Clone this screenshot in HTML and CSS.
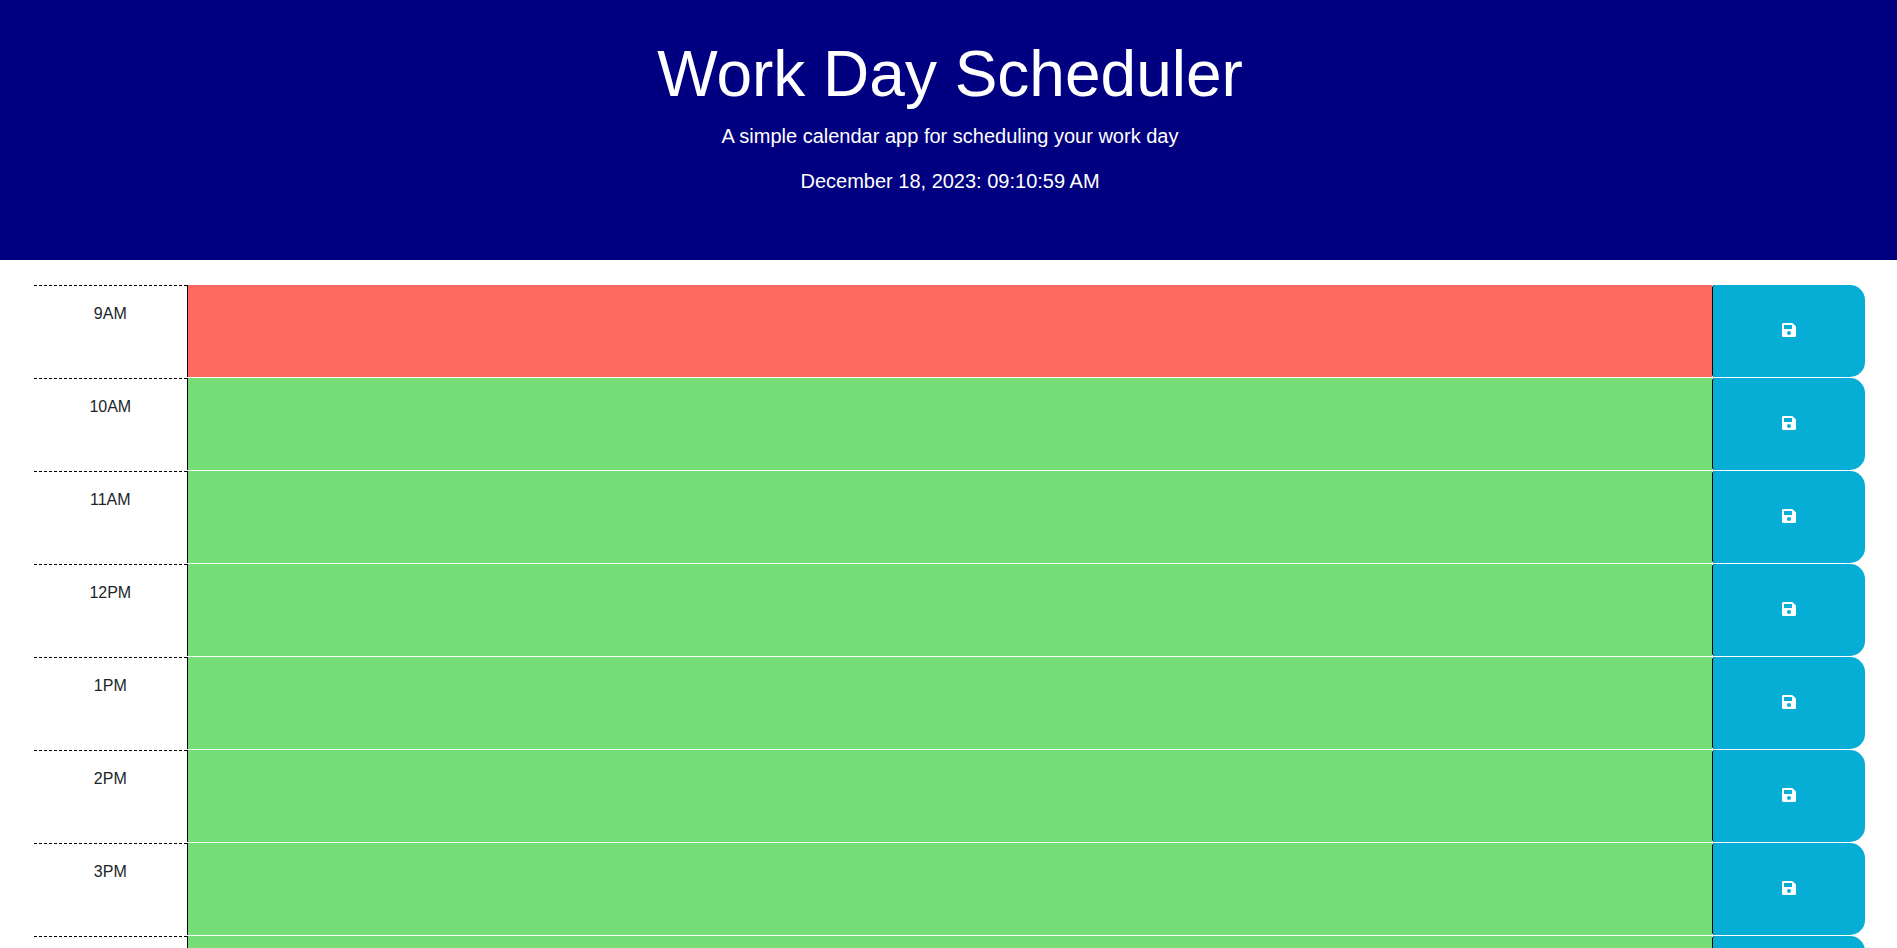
FILE: index.html
```html
<!DOCTYPE html>
<html lang="en">
<head>
  <meta charset="UTF-8">
  <meta name="viewport" content="width=device-width, initial-scale=1.0">
  <title>Work Day Scheduler</title>
  <link rel="stylesheet" href="styles.css">
</head>
<body>
  <header class="jumbotron">
    <h1>Work Day Scheduler</h1>
    <p class="lead">A simple calendar app for scheduling your work day</p>
    <p class="lead">December 18, 2023: 09:10:59 AM</p>
  </header>

  <main class="schedule">
    <div class="time-block">
      <div class="hour">9AM</div>
      <textarea class="description present"></textarea>
      <button class="saveBtn" aria-label="save"><svg class="save-icon" viewBox="0 0 448 512"><path d="M433.941 129.941l-83.882-83.882A48 48 0 0 0 316.118 32H48C21.49 32 0 53.49 0 80v352c0 26.51 21.49 48 48 48h352c26.51 0 48-21.49 48-48V163.882a48 48 0 0 0-14.059-33.941zM224 416c-35.346 0-64-28.654-64-64 0-35.346 28.654-64 64-64s64 28.654 64 64c0 35.346-28.654 64-64 64zm96-304.52V212c0 6.627-5.373 12-12 12H76c-6.627 0-12-5.373-12-12V108c0-6.627 5.373-12 12-12h228.52c3.183 0 6.235 1.264 8.485 3.515l3.48 3.48A11.996 11.996 0 0 1 320 111.48z"/></svg></button>
    </div>
    <div class="time-block">
      <div class="hour">10AM</div>
      <textarea class="description future"></textarea>
      <button class="saveBtn" aria-label="save"><svg class="save-icon" viewBox="0 0 448 512"><path d="M433.941 129.941l-83.882-83.882A48 48 0 0 0 316.118 32H48C21.49 32 0 53.49 0 80v352c0 26.51 21.49 48 48 48h352c26.51 0 48-21.49 48-48V163.882a48 48 0 0 0-14.059-33.941zM224 416c-35.346 0-64-28.654-64-64 0-35.346 28.654-64 64-64s64 28.654 64 64c0 35.346-28.654 64-64 64zm96-304.52V212c0 6.627-5.373 12-12 12H76c-6.627 0-12-5.373-12-12V108c0-6.627 5.373-12 12-12h228.52c3.183 0 6.235 1.264 8.485 3.515l3.48 3.48A11.996 11.996 0 0 1 320 111.48z"/></svg></button>
    </div>
    <div class="time-block">
      <div class="hour">11AM</div>
      <textarea class="description future"></textarea>
      <button class="saveBtn" aria-label="save"><svg class="save-icon" viewBox="0 0 448 512"><path d="M433.941 129.941l-83.882-83.882A48 48 0 0 0 316.118 32H48C21.49 32 0 53.49 0 80v352c0 26.51 21.49 48 48 48h352c26.51 0 48-21.49 48-48V163.882a48 48 0 0 0-14.059-33.941zM224 416c-35.346 0-64-28.654-64-64 0-35.346 28.654-64 64-64s64 28.654 64 64c0 35.346-28.654 64-64 64zm96-304.52V212c0 6.627-5.373 12-12 12H76c-6.627 0-12-5.373-12-12V108c0-6.627 5.373-12 12-12h228.52c3.183 0 6.235 1.264 8.485 3.515l3.48 3.48A11.996 11.996 0 0 1 320 111.48z"/></svg></button>
    </div>
    <div class="time-block">
      <div class="hour">12PM</div>
      <textarea class="description future"></textarea>
      <button class="saveBtn" aria-label="save"><svg class="save-icon" viewBox="0 0 448 512"><path d="M433.941 129.941l-83.882-83.882A48 48 0 0 0 316.118 32H48C21.49 32 0 53.49 0 80v352c0 26.51 21.49 48 48 48h352c26.51 0 48-21.49 48-48V163.882a48 48 0 0 0-14.059-33.941zM224 416c-35.346 0-64-28.654-64-64 0-35.346 28.654-64 64-64s64 28.654 64 64c0 35.346-28.654 64-64 64zm96-304.52V212c0 6.627-5.373 12-12 12H76c-6.627 0-12-5.373-12-12V108c0-6.627 5.373-12 12-12h228.52c3.183 0 6.235 1.264 8.485 3.515l3.48 3.48A11.996 11.996 0 0 1 320 111.48z"/></svg></button>
    </div>
    <div class="time-block">
      <div class="hour">1PM</div>
      <textarea class="description future"></textarea>
      <button class="saveBtn" aria-label="save"><svg class="save-icon" viewBox="0 0 448 512"><path d="M433.941 129.941l-83.882-83.882A48 48 0 0 0 316.118 32H48C21.49 32 0 53.49 0 80v352c0 26.51 21.49 48 48 48h352c26.51 0 48-21.49 48-48V163.882a48 48 0 0 0-14.059-33.941zM224 416c-35.346 0-64-28.654-64-64 0-35.346 28.654-64 64-64s64 28.654 64 64c0 35.346-28.654 64-64 64zm96-304.52V212c0 6.627-5.373 12-12 12H76c-6.627 0-12-5.373-12-12V108c0-6.627 5.373-12 12-12h228.52c3.183 0 6.235 1.264 8.485 3.515l3.48 3.48A11.996 11.996 0 0 1 320 111.48z"/></svg></button>
    </div>
    <div class="time-block">
      <div class="hour">2PM</div>
      <textarea class="description future"></textarea>
      <button class="saveBtn" aria-label="save"><svg class="save-icon" viewBox="0 0 448 512"><path d="M433.941 129.941l-83.882-83.882A48 48 0 0 0 316.118 32H48C21.49 32 0 53.49 0 80v352c0 26.51 21.49 48 48 48h352c26.51 0 48-21.49 48-48V163.882a48 48 0 0 0-14.059-33.941zM224 416c-35.346 0-64-28.654-64-64 0-35.346 28.654-64 64-64s64 28.654 64 64c0 35.346-28.654 64-64 64zm96-304.52V212c0 6.627-5.373 12-12 12H76c-6.627 0-12-5.373-12-12V108c0-6.627 5.373-12 12-12h228.52c3.183 0 6.235 1.264 8.485 3.515l3.48 3.48A11.996 11.996 0 0 1 320 111.48z"/></svg></button>
    </div>
    <div class="time-block">
      <div class="hour">3PM</div>
      <textarea class="description future"></textarea>
      <button class="saveBtn" aria-label="save"><svg class="save-icon" viewBox="0 0 448 512"><path d="M433.941 129.941l-83.882-83.882A48 48 0 0 0 316.118 32H48C21.49 32 0 53.49 0 80v352c0 26.51 21.49 48 48 48h352c26.51 0 48-21.49 48-48V163.882a48 48 0 0 0-14.059-33.941zM224 416c-35.346 0-64-28.654-64-64 0-35.346 28.654-64 64-64s64 28.654 64 64c0 35.346-28.654 64-64 64zm96-304.52V212c0 6.627-5.373 12-12 12H76c-6.627 0-12-5.373-12-12V108c0-6.627 5.373-12 12-12h228.52c3.183 0 6.235 1.264 8.485 3.515l3.48 3.48A11.996 11.996 0 0 1 320 111.48z"/></svg></button>
    </div>
    <div class="time-block">
      <div class="hour"></div>
      <textarea class="description future"></textarea>
      <button class="saveBtn" aria-label="save"><svg class="save-icon" viewBox="0 0 448 512"><path d="M433.941 129.941l-83.882-83.882A48 48 0 0 0 316.118 32H48C21.49 32 0 53.49 0 80v352c0 26.51 21.49 48 48 48h352c26.51 0 48-21.49 48-48V163.882a48 48 0 0 0-14.059-33.941zM224 416c-35.346 0-64-28.654-64-64 0-35.346 28.654-64 64-64s64 28.654 64 64c0 35.346-28.654 64-64 64zm96-304.52V212c0 6.627-5.373 12-12 12H76c-6.627 0-12-5.373-12-12V108c0-6.627 5.373-12 12-12h228.52c3.183 0 6.235 1.264 8.485 3.515l3.48 3.48A11.996 11.996 0 0 1 320 111.48z"/></svg></button>
    </div>
  </main>
</body>
</html>
```

FILE: styles.css
```css
* { box-sizing: border-box; }
body { margin: 0; font-family: "Liberation Sans", Arial, sans-serif; color: #212529; background: #fff; line-height: 1.5; }

.jumbotron { height: 260px; padding: 36px 0 0 3px; background: #000080; color: #fff; text-align: center; }
.jumbotron h1 { margin: 0 0 9px; font-size: 64px; font-weight: 400; line-height: 1.2; }
.lead { margin: 0 0 16px; font-size: 20px; font-weight: 300; line-height: 29px; }

.schedule { margin: 25px 32px 0 34px; }
.time-block { display: grid; grid-template-columns: 1fr 10fr 1fr; height: 93px; }
.hour { padding-top: 16px; border-top: 1px dashed #000; background: #fff; font-size: 16px; text-align: center; }
.description { display: block; width: 100%; height: 92px; padding: 8px; border: 0; border-left: 1px solid #000; background: #77dd77; resize: none; }
.present { background: #ff6961; }
.future { background: #77dd77; }
.saveBtn { display: flex; align-items: center; justify-content: center; height: 92px; padding: 0 0 2px; border: 0; border-left: 1px solid #000; border-radius: 3px 15px 15px 3px; background: #06aed5; color: #fff; }
.save-icon { width: 16px; height: 16px; fill: #fff; }
```
